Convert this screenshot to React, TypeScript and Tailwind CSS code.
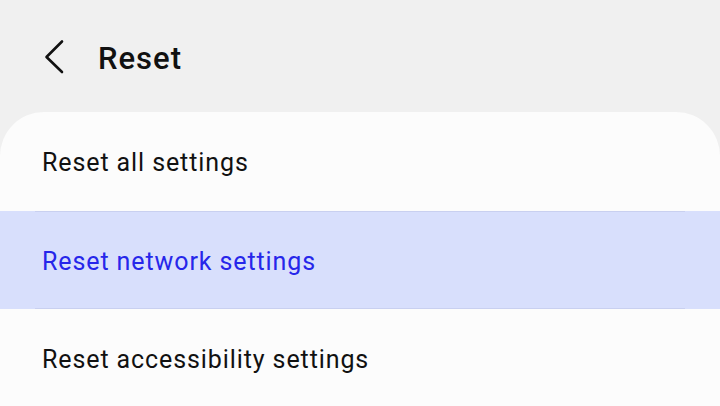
const rows = [
  { title: "Reset all settings", active: false },
  { title: "Reset network settings", active: true },
  { title: "Reset accessibility settings", active: false },
]

export default function App() {
  return (
    <div
      className="w-[720px] h-[406px] overflow-hidden bg-[#f0f0f0] flex flex-col"
      style={{ fontFamily: "Roboto, 'Noto Sans', sans-serif" }}
    >
      {/* Header */}
      <div className="h-[112px] flex items-start pt-[38px] pl-[44px]">
        <button className="w-[22px] h-[36px] flex items-center justify-center">
          <svg width="22" height="36" viewBox="0 0 22 36" fill="none">
            <path
              d="M18 3.5 L2.5 19 L18 34"
              stroke="#111"
              strokeWidth="2.6"
              strokeLinecap="round"
              strokeLinejoin="round"
            />
          </svg>
        </button>
        <h1 className="ml-[32px] mt-[1px] text-[31px] leading-[40px] font-medium text-[#111] tracking-[1px]">
          Reset
        </h1>
      </div>

      {/* Card */}
      <div className="flex-1 bg-[#fcfcfc] rounded-t-[44px] overflow-hidden flex flex-col">
        {rows.map((row, i) =>
          row.active ? (
            <div key={row.title} className="relative h-[98px] shrink-0 bg-[#d8dffc] flex items-center pl-[42px] pt-[3px]">
              <div className="absolute top-0 left-[35px] right-[35px] h-px bg-[#c9d0f0]" />
              <div className="absolute bottom-0 left-[35px] right-[35px] h-px bg-[#c9d0f0]" />
              <span className="text-[25px] text-[#2626ea] tracking-[0.9px]">{row.title}</span>
            </div>
          ) : (
            <div
              key={row.title}
              className={`${i === 0 ? "h-[99px]" : "h-[98px]"} shrink-0 flex items-center pl-[42px] pt-[3px]`}
            >
              <span className="text-[25px] text-[#111] tracking-[0.9px]">{row.title}</span>
            </div>
          )
        )}
      </div>
    </div>
  )
}
